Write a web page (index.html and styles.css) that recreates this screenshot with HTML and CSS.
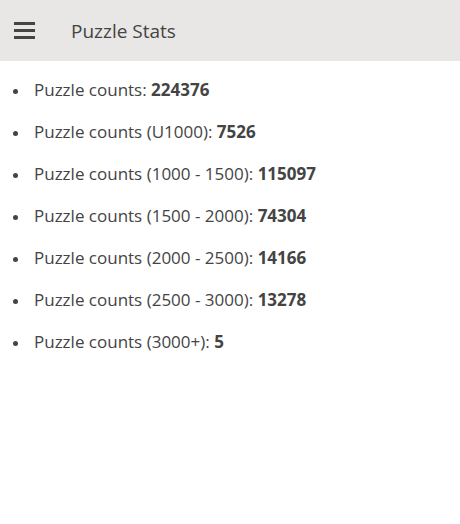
FILE: index.html
```html
<!DOCTYPE html>
<html>
<head>
<meta charset="utf-8">
<link rel="stylesheet" href="styles.css">
</head>
<body>
<header class="topbar">
  <svg class="menu" width="21" height="17" viewBox="0 0 21 17"><rect x="0" y="0" width="21" height="3" fill="#444"/><rect x="0" y="7" width="21" height="3" fill="#444"/><rect x="0" y="14" width="21" height="3" fill="#444"/></svg>
  <span class="title">Puzzle Stats</span>
</header>
<ul class="stats">
  <li>Puzzle counts: <b>224376</b></li>
  <li>Puzzle counts (U1000): <b>7526</b></li>
  <li>Puzzle counts (1000 - 1500): <b>115097</b></li>
  <li>Puzzle counts (1500 - 2000): <b>74304</b></li>
  <li>Puzzle counts (2000 - 2500): <b>14166</b></li>
  <li>Puzzle counts (2500 - 3000): <b>13278</b></li>
  <li>Puzzle counts (3000+): <b>5</b></li>
</ul>
</body>
</html>
```
FILE: styles.css
```css
html, body {
  margin: 0;
  padding: 0;
  background: #fff;
  font-family: "Open Sans", sans-serif;
  color: #444;
}
.topbar {
  height: 61px;
  background: #e8e7e5;
  display: flex;
  align-items: center;
  padding-left: 14px;
}
.menu {
  display: block;
}
.title {
  margin-left: 36px;
  font-size: 19px;
  color: #444;
}
.stats {
  list-style: none;
  margin: 0;
  padding: 8px 0 0 0;
}
.stats li {
  position: relative;
  line-height: 42px;
  font-size: 17px;
  padding-left: 34px;
}
.stats li::before {
  content: "";
  position: absolute;
  left: 13px;
  top: 20px;
  width: 5px;
  height: 5px;
  border-radius: 50%;
  background: #444;
}
.stats b {
  font-weight: 700;
}
```
